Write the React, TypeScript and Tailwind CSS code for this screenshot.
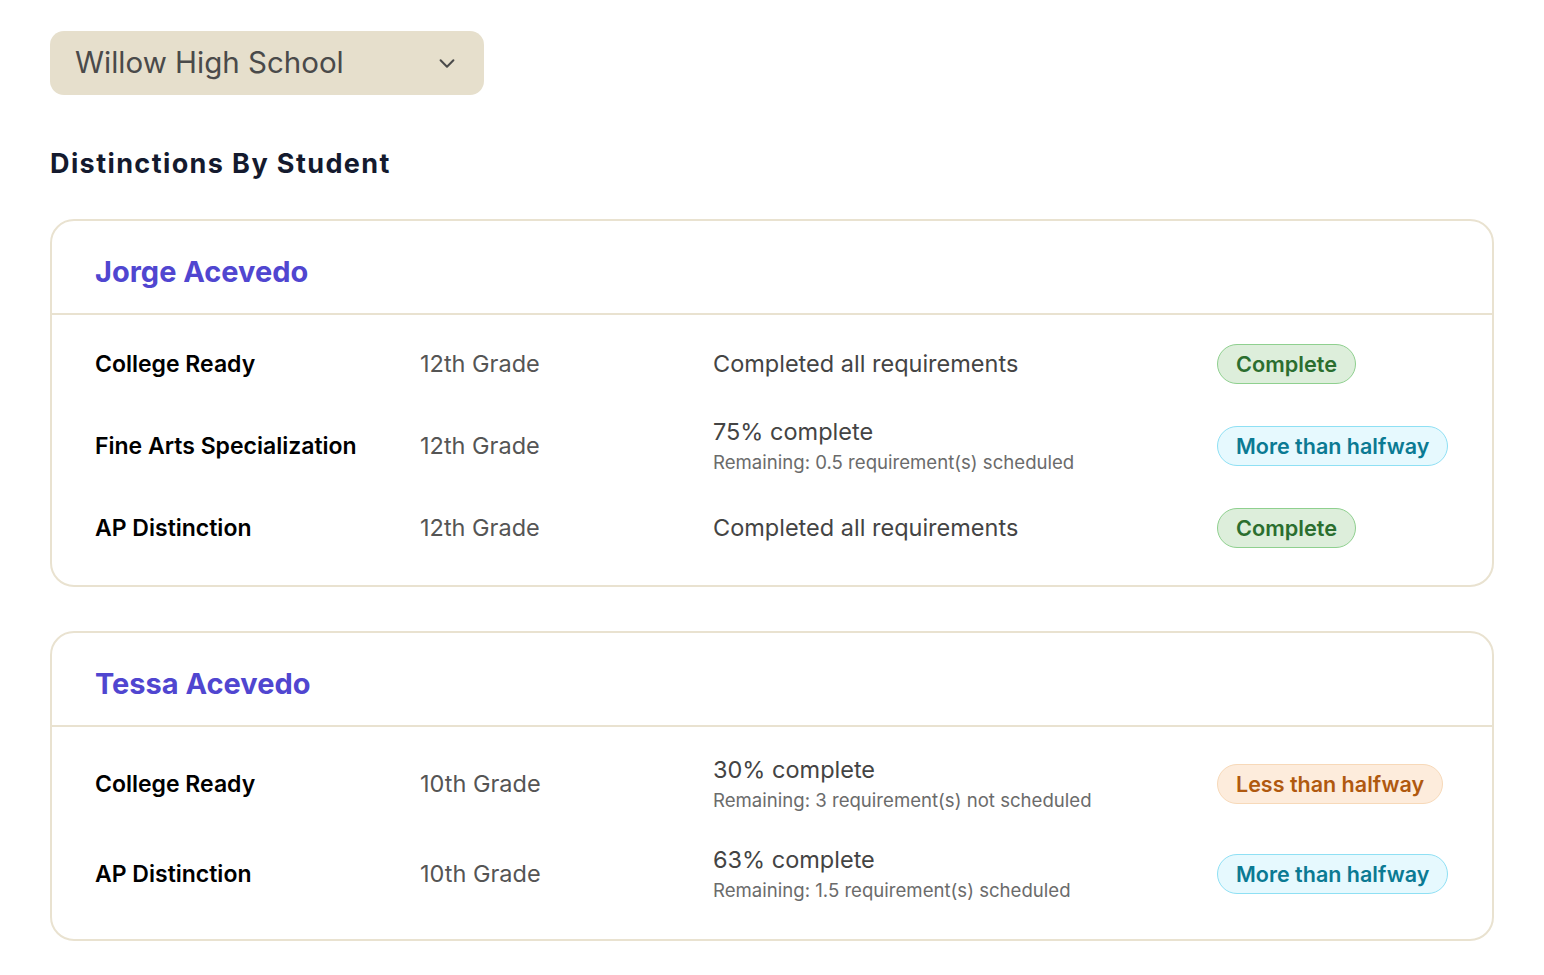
import React from "react";

type Status = "complete" | "more" | "less";

interface Row {
  name: string;
  grade: string;
  status: string;
  sub?: string;
  badge: Status;
}

const students: { name: string; rows: Row[] }[] = [
  {
    name: "Jorge Acevedo",
    rows: [
      { name: "College Ready", grade: "12th Grade", status: "Completed all requirements", badge: "complete" },
      {
        name: "Fine Arts Specialization",
        grade: "12th Grade",
        status: "75% complete",
        sub: "Remaining: 0.5 requirement(s) scheduled",
        badge: "more",
      },
      { name: "AP Distinction", grade: "12th Grade", status: "Completed all requirements", badge: "complete" },
    ],
  },
  {
    name: "Tessa Acevedo",
    rows: [
      {
        name: "College Ready",
        grade: "10th Grade",
        status: "30% complete",
        sub: "Remaining: 3 requirement(s) not scheduled",
        badge: "less",
      },
      {
        name: "AP Distinction",
        grade: "10th Grade",
        status: "63% complete",
        sub: "Remaining: 1.5 requirement(s) scheduled",
        badge: "more",
      },
    ],
  },
];

function Badge({ kind }: { kind: Status }) {
  if (kind === "complete")
    return (
      <span className="inline-flex h-[40px] items-center whitespace-nowrap rounded-full border border-[#8fd08f] bg-[#ddeedb] px-[18px] text-[21.7px] font-semibold text-[#2b6e2f]">
        Complete
      </span>
    );
  if (kind === "more")
    return (
      <span className="inline-flex h-[40px] items-center whitespace-nowrap rounded-full border border-[#8fe0f4] bg-[#e6f9fe] px-[18px] text-[21.5px] font-semibold text-[#0b7a93]">
        More than halfway
      </span>
    );
  return (
    <span className="inline-flex h-[40px] items-center whitespace-nowrap rounded-full border border-[#f7d9b9] bg-[#fdecdc] px-[18px] text-[21.5px] font-semibold text-[#b0590f]">
      Less than halfway
    </span>
  );
}

export default function App() {
  return (
    <div className="min-h-screen bg-white px-[50px] pt-[31px] pb-[32px] font-['Inter','Noto_Sans',sans-serif]">
      <button className="flex h-[64px] w-[434px] items-center justify-between rounded-[14px] bg-[#e6dfcc] pl-[25px] pr-[26px] text-[29.5px] leading-[36px] text-[#4a4a4a]">
        <span className="-mt-[2px]">Willow High School</span>
        <svg width="22" height="22" viewBox="0 0 24 24" fill="none" stroke="#4a4a4a" strokeWidth="2.2" strokeLinecap="round" strokeLinejoin="round">
          <path d="M5 9l7 7 7-7" />
        </svg>
      </button>

      <h1 className="mt-[51px] text-[27px] font-bold leading-[36px] tracking-[1.4px] text-[#141a2e]">Distinctions By Student</h1>

      <div className="mt-[37px] flex flex-col gap-[44px]">
        {students.map((s) => (
          <div key={s.name} className="rounded-[24px] border-2 border-[#e9e2d0]">
            <div className="border-b-2 border-[#e9e2d0] px-[43px] pt-[33px] pb-[23px]">
              <h2 className="text-[29px] font-bold leading-[36px] text-[#5046d0]">{s.name}</h2>
            </div>
            <div className="px-[43px] pt-[12px] pb-[20px]">
              {s.rows.map((r, i) => (
                <div key={i} className="grid grid-cols-[325px_293px_504px_1fr] items-center py-[17px]">
                  <div className="text-[23px] font-semibold leading-[28px] text-black">{r.name}</div>
                  <div className="text-[23.5px] leading-[28px] text-[#555555]">{r.grade}</div>
                  <div>
                    <div className="text-[23.5px] leading-[28px] text-[#444444]">{r.status}</div>
                    {r.sub && <div className="mt-[4px] text-[18.6px] leading-[24px] text-[#6b6b6b]">{r.sub}</div>}
                  </div>
                  <div className="flex min-h-[40px] items-center">
                    <Badge kind={r.badge} />
                  </div>
                </div>
              ))}
            </div>
          </div>
        ))}
      </div>
    </div>
  );
}
